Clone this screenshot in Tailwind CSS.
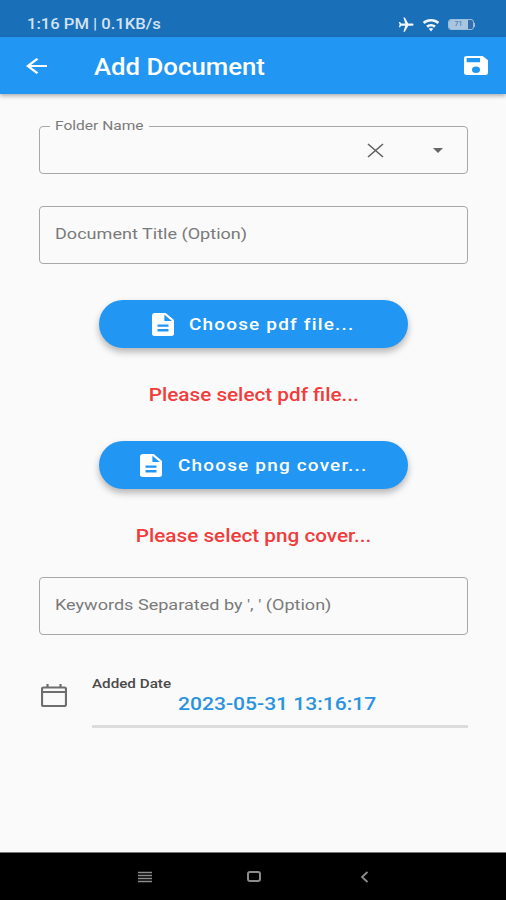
<!DOCTYPE html>
<html lang="en">
  <head>
    <meta charset="UTF-8" />
    <title>Add Document</title>
    <script src="https://cdn.jsdelivr.net/npm/@tailwindcss/browser@4"></script>
  </head>
  <body class="h-[900px] w-[506px] overflow-hidden flex flex-col bg-[#fafafa] font-[Roboto,sans-serif]">
    <!-- status bar -->
    <div class="h-[37px] shrink-0 bg-[#1a6fb9] flex items-center justify-between pl-[27px] pr-[31px] pt-[12px]">
      <span class="origin-left scale-x-[1.186] text-[14px] font-medium text-[#d3e3f1]">1:16 PM | 0.1KB/s</span>
      <div class="flex items-center gap-[7px]">
        <svg class="w-[18px] h-[18px]" viewBox="0 0 24 24" fill="#f2f7fb"><path d="M21 15.5v-2l-8-4.5V3.5a1.5 1.5 0 0 0-3 0V9l-8 4.5v2l8-2.5v5.5L8 20v1.5l3.5-1 3.5 1V20l-2-1.5V13z" transform="rotate(90 12 12)"/></svg>
        <svg class="w-[18px] h-[16px]" viewBox="0 0 24 20" fill="#f2f7fb"><path d="M12 2C7.5 2 3.6 3.6 1 6l2.4 2.6C5.6 6.6 8.6 5.4 12 5.4s6.4 1.2 8.6 3.2L23 6c-2.6-2.4-6.5-4-11-4zM5.6 11l2.4 2.5c1-.9 2.4-1.5 4-1.5s3 .6 4 1.5l2.4-2.5C16.8 9.5 14.5 8.5 12 8.5S7.2 9.5 5.6 11zM9 15l3 3.5 3-3.5c-.8-.6-1.8-1-3-1s-2.2.4-3 1z"/></svg>
        <div class="flex items-center ml-[1px]">
          <div class="w-[26px] h-[11px] rounded-[3px] bg-[#2f6fae] border border-[#9dbedb] flex items-center overflow-hidden">
            <div class="w-[19px] h-full bg-[#a9c6e0] text-[7px] leading-[9px] text-center text-[#2f6fae]">71</div>
          </div>
          <div class="w-[1px] h-[4px] bg-[#9dbedb]"></div>
        </div>
      </div>
    </div>
    <!-- app bar -->
    <header class="h-[57px] shrink-0 bg-[#2196f3] flex items-center pl-[26px] pr-[18px] shadow-[0_2px_4px_rgba(0,0,0,0.3)] text-white">
      <svg class="w-[21px] h-[16px]" viewBox="4 4 16 16" preserveAspectRatio="none" fill="white"><path d="M20 11H7.83l5.59-5.59L12 4l-8 8 8 8 1.41-1.41L7.83 13H20v-2z"/></svg>
      <h1 class="ml-[47px] pt-[5px] origin-left scale-x-[1.12] text-[23px] font-medium">Add Document</h1>
      <svg class="ml-auto w-[24px] h-[19px]" viewBox="3 3 18 18" preserveAspectRatio="none" fill="white"><path d="M17 3H5a2 2 0 0 0-2 2v14a2 2 0 0 0 2 2h14a2 2 0 0 0 2-2V7l-4-4zm-5 16a3 3 0 1 1 0-6 3 3 0 0 1 0 6zm3-10H5V5h10v4z"/></svg>
    </header>
    <main class="flex-1 flex flex-col pl-[39px] pr-[38px] pt-[32px]">
      <!-- folder name -->
      <div class="relative h-[48px] border border-[#a8a8a8] rounded-[4px] flex items-center justify-end pr-[22px]">
        <div class="absolute left-[10px] top-[-9px] w-[99px] h-[16px] bg-[#fafafa]"></div>
        <span class="absolute left-[15px] top-[-10px] origin-left scale-x-[1.15] text-[13.5px] leading-[16px] text-[#7a7a7a]">Folder Name</span>
        <svg class="w-[17px] h-[15px] mr-[42px]" viewBox="0 0 17 15" fill="none" stroke="#616161" stroke-width="1.6"><path d="M1 1l15 13M16 1L1 14"/></svg>
        <svg class="w-[24px] h-[24px] mr-[-5px]" viewBox="0 0 24 24" fill="#666666"><path d="M7 10l5 5 5-5z"/></svg>
      </div>
      <!-- document title -->
      <div class="mt-[32px] h-[58px] border border-[#a8a8a8] rounded-[4px] flex items-center px-[15px] text-[15.5px] text-[#7a7a7a]">
        <span class="origin-left scale-x-[1.165]">Document Title (Option)</span>
      </div>
      <!-- pdf -->
      <button class="mt-[36px] ml-[60px] pl-[53px] w-[309px] h-[48px] rounded-full bg-[#2196f3] text-white flex items-center shadow-[0_4px_7px_rgba(0,0,0,0.28)] text-[16px] font-medium tracking-[1px]">
        <svg class="w-[22px] h-[23px] mr-[15px]" viewBox="4 2 16 20" preserveAspectRatio="none" fill="white"><path d="M14 2H6c-1.1 0-2 .9-2 2v16c0 1.1.9 2 2 2h12c1.1 0 2-.9 2-2V8l-6-6zm2 16H8v-2h8v2zm0-4H8v-2h8v2zm-3-5V3.5L18.5 9H13z"/></svg>
        <span class="pt-[1px] origin-left scale-x-[1.185]">Choose pdf file...</span>
      </button>
      <p class="mt-[36px] text-center text-[17.5px] leading-[22px] font-medium text-[#f23c3c]">
        <span class="inline-block scale-x-[1.183]">Please select pdf file...</span>
      </p>
      <!-- png -->
      <button class="mt-[35px] ml-[60px] pl-[41px] w-[309px] h-[48px] rounded-full bg-[#2196f3] text-white flex items-center shadow-[0_4px_7px_rgba(0,0,0,0.28)] text-[16px] font-medium tracking-[1px]">
        <svg class="w-[22px] h-[23px] mr-[16px]" viewBox="4 2 16 20" preserveAspectRatio="none" fill="white"><path d="M14 2H6c-1.1 0-2 .9-2 2v16c0 1.1.9 2 2 2h12c1.1 0 2-.9 2-2V8l-6-6zm2 16H8v-2h8v2zm0-4H8v-2h8v2zm-3-5V3.5L18.5 9H13z"/></svg>
        <span class="pt-[1px] origin-left scale-x-[1.185]">Choose png cover...</span>
      </button>
      <p class="mt-[36px] text-center text-[17.5px] leading-[22px] font-medium text-[#f23c3c]">
        <span class="inline-block scale-x-[1.183]">Please select png cover...</span>
      </p>
      <!-- keywords -->
      <div class="mt-[30px] h-[58px] border border-[#a8a8a8] rounded-[4px] flex items-center px-[15px] text-[15.5px] text-[#7a7a7a]">
        <span class="origin-left scale-x-[1.165]">Keywords Separated by ', ' (Option)</span>
      </div>
      <!-- date -->
      <div class="mt-[41px] flex">
        <svg class="w-[26px] h-[23px] mt-[8px] mr-[25px] ml-[2px]" viewBox="0 0 26 23" fill="none" stroke="#6e6e6e" stroke-width="2.2"><path d="M2.5 3.5h21a1.5 1.5 0 0 1 1.5 1.5v15.5a1.5 1.5 0 0 1-1.5 1.5h-21A1.5 1.5 0 0 1 1 20.5V5a1.5 1.5 0 0 1 1.5-1.5zM1 8h24M6.5 0v3M19.5 0v3"/></svg>
        <div class="flex-1 border-b-[3px] border-[#dcdcdc] h-[52px]">
          <div class="origin-left scale-x-[1.17] w-fit text-[13px] leading-[15px] font-medium text-[#4a4a4a]">Added Date</div>
          <div class="mt-[2px] pl-[86px] text-[18px] leading-[22px] font-medium text-[#2a93e0]">
            <span class="inline-block origin-left scale-x-[1.17]">2023-05-31 13:16:17</span>
          </div>
        </div>
      </div>
    </main>
    <!-- nav bar -->
    <nav class="h-[48px] shrink-0 bg-black border-t border-[#777] flex items-center pl-[138px]">
      <svg class="w-[14px] h-[12px]" viewBox="0 0 14 12" fill="none" stroke="#8c8c8c" stroke-width="1.5"><path d="M0 1.5h14M0 4.5h14M0 7.5h14M0 10.5h14"/></svg>
      <div class="ml-[95px] w-[14px] h-[11px] border-2 border-[#8c8c8c] rounded-[3px]"></div>
      <svg class="ml-[99px] w-[10px] h-[12px]" viewBox="0 0 10 12" fill="none" stroke="#8c8c8c" stroke-width="1.8"><path d="M7.5 1 2 6l5.5 5"/></svg>
    </nav>
  </body>
</html>
